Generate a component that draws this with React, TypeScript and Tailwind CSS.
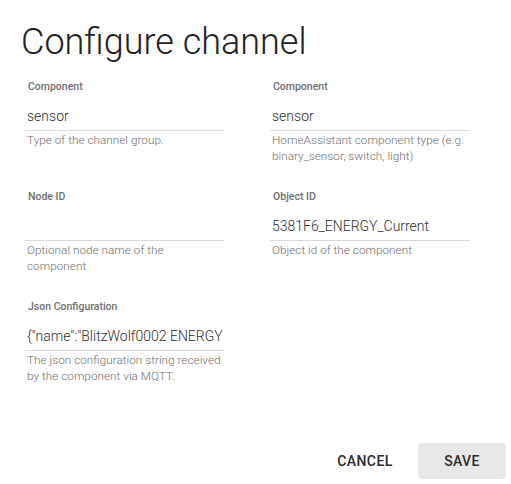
import React from "react";

type FieldProps = { label: string; value: string; helper: string };

function Field({ label, value, helper }: FieldProps) {
  return (
    <div className="h-[110px] w-[200px] flex flex-col">
      <div className="pt-[1px] pl-[3px] text-[10.5px] leading-[14px] font-medium text-[#707070]">{label}</div>
      <div className="h-[37px] flex items-end pb-[5px] pl-[2px] border-b border-[#dcdcdc] text-[14px] leading-[18px] font-light text-[#303030] whitespace-nowrap overflow-hidden">
        {value}
      </div>
      <div className="mt-[2px] pl-[2px] pr-[3px] text-[11.8px] leading-[15.5px] font-light text-[#6f6f6f]">{helper}</div>
    </div>
  );
}

export default function App() {
  return (
    <div
      className="w-[511px] h-[484px] bg-white relative overflow-hidden"
      style={{ fontFamily: "Roboto, 'Noto Sans', sans-serif" }}
    >
      <h2 className="pl-[21px] pt-[22px] text-[36px] leading-[40px] font-light text-[#222222]">
        Configure channel
      </h2>
      <div className="mt-[17px] pl-[25px] grid grid-cols-[200px_200px] gap-x-[45px]">
        <Field label="Component" value="sensor" helper="Type of the channel group." />
        <Field
          label="Component"
          value="sensor"
          helper="HomeAssistant component type (e.g. binary_sensor, switch, light)"
        />
        <Field label="Node ID" value="" helper="Optional node name of the component" />
        <Field label="Object ID" value="5381F6_ENERGY_Current" helper="Object id of the component" />
        <Field
          label="Json Configuration"
          value={'{"name":"BlitzWolf0002 ENERGY'}
          helper="The json configuration string received by the component via MQTT."
        />
      </div>
      <div className="mt-[34px] flex justify-end gap-[9px] pr-[5px]">
        <button className="w-[88px] h-[36px] rounded-[4px] text-[14px] font-medium tracking-[0.4px] text-[#2b2b2b]">
          CANCEL
        </button>
        <button className="w-[88px] h-[36px] rounded-[4px] bg-[#e8e8e8] text-[14px] font-medium tracking-[0.4px] text-[#2b2b2b]">
          SAVE
        </button>
      </div>
    </div>
  );
}
